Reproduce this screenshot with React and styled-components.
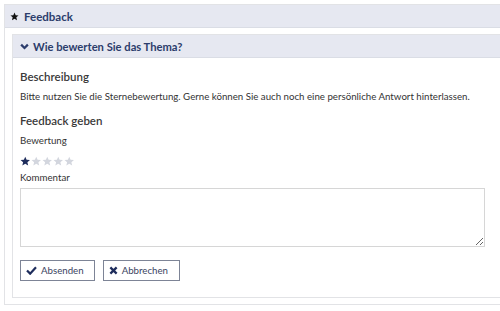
import styled, { createGlobalStyle } from "styled-components";

const GlobalStyle = createGlobalStyle`
  html, body {
    margin: 0;
    background: #fff;
    overflow: hidden;
  }
  body {
    font-family: Lato, "Liberation Sans", sans-serif;
    color: #333;
  }
`;

const Page = styled.div`
  padding: 4px 0 0 4px;
  width: 500px;
  box-sizing: border-box;
`;

const Panel = styled.section`
  width: calc(100% + 20px);
  border: 1px solid #e2e3e6;
  box-sizing: border-box;
`;

const PanelHeading = styled.div`
  height: 22px;
  display: flex;
  align-items: center;
  gap: ${(p) => p.$gap}px;
  padding-left: ${(p) => p.$indent}px;
  background-color: #e6e8f1;
  border-bottom: 1px solid #dadde5;
  font-size: ${(p) => p.$size}px;
  font-weight: 700;
  color: #2c3d6c;
`;

const PanelBody = styled.div`
  padding: ${(p) => p.$pad};
`;

const SectionTitle = styled.h3`
  margin: 0;
  font-size: 11.5px;
  font-weight: 600;
  color: #3a3a3a;
  line-height: 16px;
`;

const Text = styled.p`
  margin: 0;
  font-size: 9.7px;
  line-height: 14px;
  color: #333;
`;

const Stars = styled.div`
  display: flex;
  gap: 0.5px;
  margin: 9px 0 3px;
`;

const Textarea = styled.textarea`
  display: block;
  width: 465px;
  height: 59px;
  margin-top: 4px;
  border: 1px solid #d6d6d6;
  box-sizing: border-box;
  font-family: inherit;
`;

const Buttons = styled.div`
  display: flex;
  gap: 8px;
  margin-top: 13px;
`;

const Button = styled.button`
  display: flex;
  align-items: center;
  gap: 4px;
  height: 21px;
  padding: 0 ${(p) => p.$padR}px 0 5px;
  background: #fff;
  border: 1px solid #7d8496;
  border-radius: 0;
  font-family: inherit;
  font-size: 9.7px;
  color: #3a4461;
  cursor: pointer;
`;

const starPath =
  "M12 1.5l3.1 7.1 7.7.6-5.9 5 1.8 7.6L12 17.8l-6.7 4 1.8-7.6-5.9-5 7.7-.6z";

const Star = ({ color, size = 10.5 }) => (
  <svg width={size} height={size} viewBox="0 0 24 24">
    <path fill={color} d={starPath} />
  </svg>
);

const App = () => {
  return (
    <>
      <GlobalStyle />
      <Page>
        <Panel>
          <PanelHeading $indent={5} $gap={5} $size={11.5}>
            <Star color="#111" size={9} />
            Feedback
          </PanelHeading>
          <PanelBody $pad="6px 0 6px 7px">
            <Panel>
              <PanelHeading $indent={7} $gap={4} $size={11.2}>
                <svg width="9" height="9" viewBox="0 0 24 24">
                  <path
                    d="M3 7l9 9 9-9"
                    fill="none"
                    stroke="#2c3d6c"
                    strokeWidth="6"
                  />
                </svg>
                Wie bewerten Sie das Thema?
              </PanelHeading>
              <PanelBody $pad="11px 0 16px 7px">
                <SectionTitle>Beschreibung</SectionTitle>
                <Text style={{ marginTop: 4 }}>
                  Bitte nutzen Sie die Sternebewertung. Gerne können Sie auch
                  noch eine persönliche Antwort hinterlassen.
                </Text>
                <SectionTitle style={{ marginTop: 10 }}>Feedback geben</SectionTitle>
                <Text style={{ marginTop: 4 }}>Bewertung</Text>
                <Stars>
                  <Star color="#1e2d5c" />
                  <Star color="#d3d6de" />
                  <Star color="#d3d6de" />
                  <Star color="#d3d6de" />
                  <Star color="#d3d6de" />
                </Stars>
                <Text>Kommentar</Text>
                <Textarea />
                <Buttons>
                  <Button $padR={10}>
                    <svg width="11" height="9" viewBox="0 0 24 20">
                      <path
                        d="M2 10l7 7L22 3"
                        fill="none"
                        stroke="#1e2d5c"
                        strokeWidth="5"
                      />
                    </svg>
                    Absenden
                  </Button>
                  <Button $padR={11}>
                    <svg width="9" height="9" viewBox="0 0 20 20">
                      <path
                        d="M3 3l14 14M17 3L3 17"
                        fill="none"
                        stroke="#1e2d5c"
                        strokeWidth="5"
                      />
                    </svg>
                    Abbrechen
                  </Button>
                </Buttons>
              </PanelBody>
            </Panel>
          </PanelBody>
        </Panel>
      </Page>
    </>
  );
};

export default App;
